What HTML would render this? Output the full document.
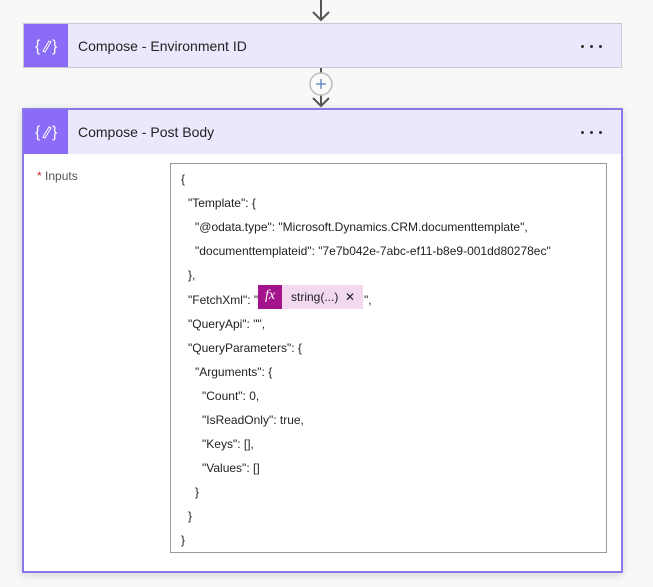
<!DOCTYPE html>
<html><head><meta charset="utf-8"><style>
body{margin:0;width:653px;height:587px;background:#f8f8f8;font-family:"Segoe UI","Liberation Sans",sans-serif;position:relative;overflow:hidden;color:#222}
.abs{position:absolute}
.card1{left:23px;top:23px;width:597px;height:43px;background:#ebe7fd;border:1px solid #c9c6d6}
.icon{position:absolute;left:0;top:0;width:44px;height:100%;background:#8a6cf8}
.title{position:absolute;left:54px;top:0;line-height:44px;font-size:14px;color:#222}
.dots{position:absolute;right:18px;top:21px;width:22px;height:3px}
.dots i{position:absolute;top:0;width:3px;height:3px;border-radius:50%;background:#333}
.card2{left:22px;top:108px;width:597px;height:461px;background:#fff;border:2px solid #8a78ea;box-shadow:0 2px 8px rgba(0,0,0,.15)}
.hdr{position:absolute;left:0;top:0;right:0;height:44px;background:#ebe7fd}
.box{left:146px;top:53px;width:435px;height:388px;border:1px solid #9a9a9a;background:#fff}
.ln{position:absolute;font-size:12px;line-height:16px;white-space:nowrap;color:#222}
</style></head><body>
<svg class="abs" style="left:0;top:0" width="653" height="110">
<line x1="321" y1="0" x2="321" y2="19" stroke="#555" stroke-width="2"/>
<polyline points="313,12 321,20 329,12" fill="none" stroke="#555" stroke-width="2"/>
<line x1="321" y1="68" x2="321" y2="106" stroke="#555" stroke-width="2"/>
<circle cx="321" cy="84" r="11" fill="#fafafa" stroke="#bbb" stroke-width="1.5"/>
<line x1="316" y1="84" x2="326" y2="84" stroke="#5a7fc0" stroke-width="1.3"/>
<line x1="321" y1="79" x2="321" y2="89" stroke="#5a7fc0" stroke-width="1.3"/>
<polyline points="313,98 321,106 329,98" fill="none" stroke="#555" stroke-width="2"/>
</svg>
<div class="abs card1"><div class="icon"><svg width="44" height="43"><text x="11" y="27" fill="#fff" font-size="16" font-family="Liberation Sans">{</text><text x="28" y="27" fill="#fff" font-size="16" font-family="Liberation Sans">}</text><path d="M19 27 L25 17 L27 18 L21 28 Z" fill="none" stroke="#fff" stroke-width="1"/></svg></div><div class="title">Compose - Environment ID</div><div class="dots"><i style="left:0"></i><i style="left:9px"></i><i style="left:18px"></i></div></div>
<div class="abs card2"><div class="hdr"><div class="icon"><svg width="44" height="44"><text x="11" y="27" fill="#fff" font-size="16" font-family="Liberation Sans">{</text><text x="28" y="27" fill="#fff" font-size="16" font-family="Liberation Sans">}</text><path d="M19 27 L25 17 L27 18 L21 28 Z" fill="none" stroke="#fff" stroke-width="1"/></svg></div><div class="title">Compose - Post Body</div><div class="dots"><i style="left:0"></i><i style="left:9px"></i><i style="left:18px"></i></div></div>
<div class="ln" style="left:13px;top:58px;color:#555"><span style="color:#c33">*</span> Inputs</div>
<div class="abs box">
<div class="ln" style="left:10px;top:7px">{</div>
<div class="ln" style="left:17px;top:31px">"Template": {</div>
<div class="ln" style="left:24px;top:55px">"@odata.type": "Microsoft.Dynamics.CRM.documenttemplate",</div>
<div class="ln" style="left:24px;top:79px">"documenttemplateid": "7e7b042e-7abc-ef11-b8e9-001dd80278ec"</div>
<div class="ln" style="left:17px;top:103px">},</div>
<div class="ln" style="left:17px;top:128px">"FetchXml": "</div>
<div class="abs" style="left:87px;top:121px;height:24px;background:#f2d9ef;white-space:nowrap;font-size:12px"><span style="display:inline-block;width:24px;height:24px;background:#a3148c;color:#fff;font-family:'Liberation Serif',serif;font-style:italic;text-align:center;line-height:22px;font-size:14px;vertical-align:top">fx</span><span style="display:inline-block;padding:0 8px 0 9px;line-height:24px;vertical-align:top">string(...) &nbsp;✕</span></div>
<div class="ln" style="left:193px;top:128px">",</div>
<div class="ln" style="left:17px;top:152px">"QueryApi": "",</div>
<div class="ln" style="left:17px;top:176px">"QueryParameters": {</div>
<div class="ln" style="left:24px;top:200px">"Arguments": {</div>
<div class="ln" style="left:31px;top:224px">"Count": 0,</div>
<div class="ln" style="left:31px;top:248px">"IsReadOnly": true,</div>
<div class="ln" style="left:31px;top:272px">"Keys": [],</div>
<div class="ln" style="left:31px;top:296px">"Values": []</div>
<div class="ln" style="left:24px;top:320px">}</div>
<div class="ln" style="left:17px;top:344px">}</div>
<div class="ln" style="left:10px;top:368px">}</div>
</div>
</div>
</body></html>
